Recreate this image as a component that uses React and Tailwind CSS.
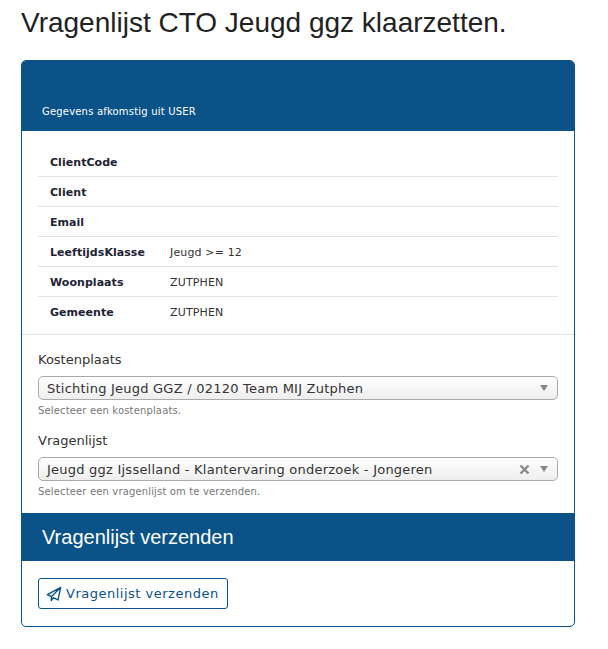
const rows = [
  ["ClientCode", ""],
  ["Client", ""],
  ["Email", ""],
  ["LeeftijdsKlasse", "Jeugd >= 12"],
  ["Woonplaats", "ZUTPHEN"],
  ["Gemeente", "ZUTPHEN"],
];

function Arrow() {
  return <span className="w-0 h-0 border-x-[4px] border-x-transparent border-t-[6px] border-t-[#888888]" />;
}

function Select({ value, clear }) {
  return (
    <div className="flex items-center h-6 w-[520px] rounded-[5px] border border-[#aaaaaa] bg-gradient-to-b from-white to-[#eeeeee] pl-2 pr-[9px]">
      <span className="flex-1 pt-[1px] text-[13px] leading-[22px] text-[#333333] tracking-[0.23px]">{value}</span>
      {clear && (
        <svg width="11" height="11" viewBox="0 0 11 11" className="mr-[10px]">
          <path d="M1.5 1.5 L9.5 9.5 M9.5 1.5 L1.5 9.5" stroke="#888888" strokeWidth="2.4" />
        </svg>
      )}
      <Arrow />
    </div>
  );
}

export default function App() {
  return (
    <div className="w-[608px] h-[649px] bg-white font-['DejaVu_Sans',sans-serif] text-[#333333] overflow-hidden">
      <h1 className="pl-[21px] pt-[7px] h-[60px] font-['Liberation_Sans',sans-serif] text-[28px] leading-[31px] text-[#222222]">
        Vragenlijst CTO Jeugd ggz klaarzetten.
      </h1>
      <div className="ml-[21px] w-[554px] h-[567px] rounded-[5px] border border-[#0a5288] overflow-hidden">
        <div className="h-[70px] bg-[#0a5288] pl-5 pt-[43px] text-[10px] leading-[16px] text-white tracking-[0.19px]">
          Gegevens afkomstig uit USER
        </div>
        <div className="h-[204px] border-b border-[#e0e4ea] pt-[16px] pl-[16px] pr-4">
          {rows.map(([k, v], i) => (
            <div
              key={k}
              className={`flex items-center h-[30px] pl-3 pt-[3px] border-b ${i < rows.length - 1 ? "border-[#dfe3ea]" : "border-transparent"}`}
            >
              <span className="w-[120px] text-[11px] font-bold text-[#222233] tracking-[0.05px]">{k}</span>
              <span className="text-[11px] text-[#333333] tracking-[0.15px]">{v}</span>
            </div>
          ))}
        </div>
        <div className="h-[178px] px-4 pt-[16px]">
          <div className="text-[13px] leading-[18px] mb-[7px]">Kostenplaats</div>
          <Select value="Stichting Jeugd GGZ / 02120 Team MIJ Zutphen" />
          <div className="text-[10px] leading-[14px] text-[#777777] mt-[4px] mb-[14px] tracking-[0.15px]">Selecteer een kostenplaats.</div>
          <div className="text-[13px] leading-[18px] mb-[7px]">Vragenlijst</div>
          <Select value="Jeugd ggz Ijsselland - Klantervaring onderzoek - Jongeren" clear />
          <div className="text-[10px] leading-[14px] text-[#777777] mt-[4px] tracking-[0.15px]">Selecteer een vragenlijst om te verzenden.</div>
        </div>
        <div className="h-[48px] bg-[#0a5288] pl-5 flex items-center font-['Liberation_Sans',sans-serif] text-[20px] text-white">
          Vragenlijst verzenden
        </div>
        <div className="pl-4 pt-[17px]">
          <button className="flex items-center w-[190px] h-[31px] rounded-[3px] border border-[#0a5288] pl-[7px] text-[13px] text-[#0a5288] tracking-[0.5px]">
            <svg width="16" height="16" viewBox="0 0 24 24" fill="none" stroke="#0a5288" strokeWidth="2" strokeLinejoin="round" className="mr-[4px]">
              <path d="M22 2 L2 13 L8 16 L22 2 L18 21 L11 17.5 L8 22 L8 16" />
            </svg>
            Vragenlijst verzenden
          </button>
        </div>
      </div>
    </div>
  );
}
